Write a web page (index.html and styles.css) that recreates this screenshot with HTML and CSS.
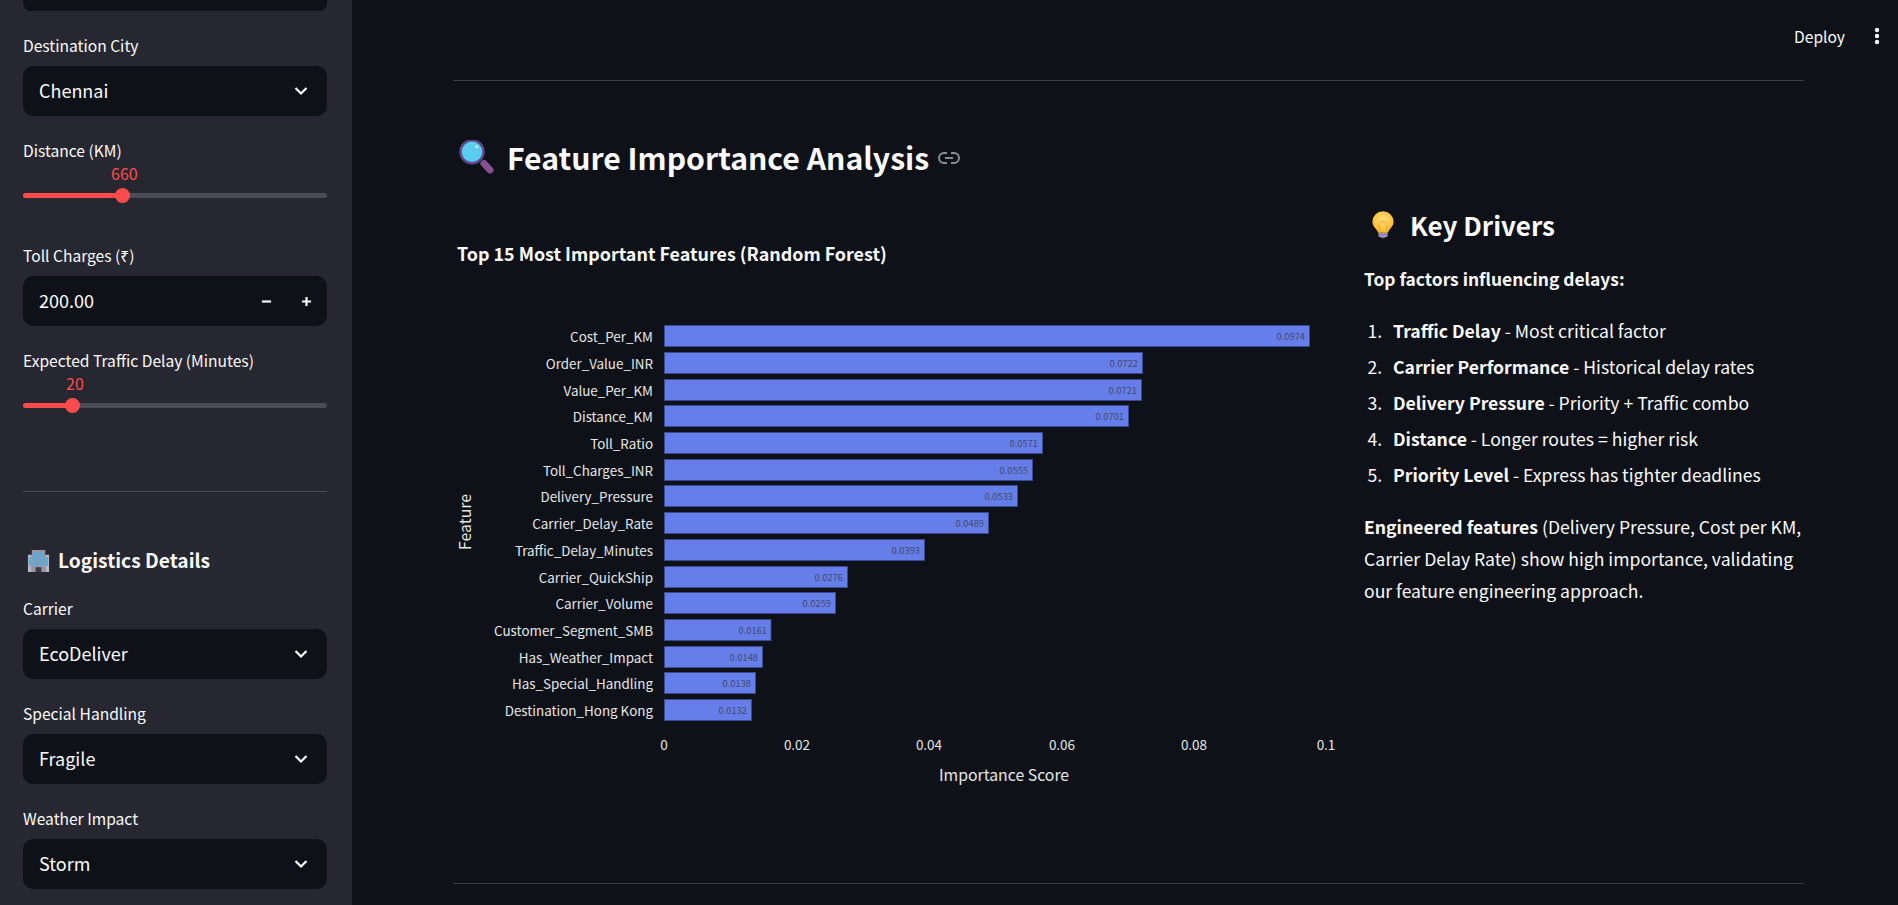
FILE: index.html
```html
<!DOCTYPE html>
<html lang="en">
<head>
    <meta charset="UTF-8">
    <meta name="viewport" content="width=device-width, initial-scale=1.0">
    <title>Feature Importance Analysis</title>
    <link rel="stylesheet" href="styles.css">
</head>
<body>
    <aside class="sidebar">
        <div class="field-cut"></div>

        <div class="field">
            <label class="field-label">Destination City</label>
            <div class="select"><span>Chennai</span>
                <svg class="chevron" viewBox="0 0 14 10"><path d="M1.5 2l5.5 5.5L12.500 2"/></svg>
            </div>
        </div>

        <div class="field">
            <label class="field-label">Distance (KM)</label>
            <div class="slider">
                <span class="slider-value slider-value-distance">660</span>
                <div class="slider-track"><div class="slider-fill slider-fill-distance"><span class="slider-thumb"></span></div></div>
            </div>
        </div>

        <div class="field">
            <label class="field-label">Toll Charges (₹)</label>
            <div class="select"><span>200.00</span>
                <div class="stepper">
                    <svg viewBox="0 0 12 12"><path d="M1 6h10"/></svg>
                    <svg viewBox="0 0 12 12"><path d="M1 6h10M6 1v10"/></svg>
                </div>
            </div>
        </div>

        <div class="field">
            <label class="field-label">Expected Traffic Delay (Minutes)</label>
            <div class="slider">
                <span class="slider-value slider-value-delay">20</span>
                <div class="slider-track"><div class="slider-fill slider-fill-delay"><span class="slider-thumb"></span></div></div>
            </div>
        </div>

        <hr class="sidebar-rule">

        <h3 class="sidebar-title">
            <svg class="emoji-building" viewBox="0 0 24 24">
                <rect x="1" y="6" width="4" height="18" fill="#b9b6c2"/>
                <rect x="19" y="6" width="4" height="18" fill="#b9b6c2"/>
                <rect x="5" y="1" width="14" height="23" fill="#9a95a6"/>
                <g fill="#3fb4ee">
                    <rect x="7" y="4" width="4" height="3.500"/><rect x="13" y="4" width="4" height="3.500"/>
                    <rect x="7" y="9" width="4" height="3.500"/><rect x="13" y="9" width="4" height="3.500"/>
                    <rect x="7" y="14" width="4" height="3"/><rect x="13" y="14" width="4" height="3"/>
                    <rect x="2" y="8.500" width="2" height="9"/><rect x="20" y="8.500" width="2" height="9"/>
                </g>
                <rect x="9" y="19" width="6" height="5" fill="#3f3a48"/>
            </svg>
            Logistics Details
        </h3>

        <div class="field">
            <label class="field-label">Carrier</label>
            <div class="select"><span>EcoDeliver</span>
                <svg class="chevron" viewBox="0 0 14 10"><path d="M1.5 2l5.5 5.5L12.500 2"/></svg>
            </div>
        </div>

        <div class="field">
            <label class="field-label">Special Handling</label>
            <div class="select"><span>Fragile</span>
                <svg class="chevron" viewBox="0 0 14 10"><path d="M1.5 2l5.5 5.5L12.500 2"/></svg>
            </div>
        </div>

        <div class="field">
            <label class="field-label">Weather Impact</label>
            <div class="select"><span>Storm</span>
                <svg class="chevron" viewBox="0 0 14 10"><path d="M1.5 2l5.5 5.5L12.500 2"/></svg>
            </div>
        </div>
    </aside>

    <main class="main">
        <header class="toolbar">
            <span class="deploy">Deploy</span>
            <svg class="kebab" viewBox="0 0 6 18"><circle cx="3" cy="3" r="2.200"/><circle cx="3" cy="9" r="2.200"/><circle cx="3" cy="15" r="2.200"/></svg>
        </header>

        <div class="content">
            <hr class="rule">

            <h2 class="page-title">
                <svg class="emoji-lens" viewBox="0 0 36 36">
                    <path d="M26 23.500l6 6.500" fill="none" stroke="#8a4f93" stroke-width="7" stroke-linecap="round"/>
                    <circle cx="14" cy="11.700" r="11.500" fill="#5bcbef" stroke="#5d4a8e" stroke-width="2.500"/>
                    <circle cx="18.700" cy="6.700" r="1.600" fill="#c4eefa"/>
                </svg>
                <span class="page-title-text">Feature Importance Analysis</span>
                <svg class="link-icon" viewBox="0 0 24 24"><path d="M10 7H7a5 5 0 0 0 0 10h3M14 7h3a5 5 0 0 1 0 10h-3M8 12h8"/></svg>
            </h2>

            <div class="columns">
                <section class="chart-col">
                    <svg class="chart" width="900" height="600" viewBox="0 0 900 600">
                        <text class="chart-title" x="4" y="41">Top 15 Most Important Features (Random Forest)</text>

                        <text class="axis-title" transform="translate(18 302) rotate(-90)" text-anchor="middle">Feature</text>

                        <g class="cats" text-anchor="end">
                            <text x="200" y="122">Cost_Per_KM</text>
                            <text x="200" y="149">Order_Value_INR</text>
                            <text x="200" y="176">Value_Per_KM</text>
                            <text x="200" y="202">Distance_KM</text>
                            <text x="200" y="229">Toll_Ratio</text>
                            <text x="200" y="256">Toll_Charges_INR</text>
                            <text x="200" y="282">Delivery_Pressure</text>
                            <text x="200" y="309">Carrier_Delay_Rate</text>
                            <text x="200" y="336">Traffic_Delay_Minutes</text>
                            <text x="200" y="363">Carrier_QuickShip</text>
                            <text x="200" y="389">Carrier_Volume</text>
                            <text x="200" y="416">Customer_Segment_SMB</text>
                            <text x="200" y="443">Has_Weather_Impact</text>
                            <text x="200" y="469">Has_Special_Handling</text>
                            <text x="200" y="496">Destination_Hong Kong</text>
                        </g>

                        <g class="bars">
                            <rect x="211.500" y="105.500" width="645" height="21"/>
                            <rect x="211.500" y="132.500" width="478" height="21"/>
                            <rect x="211.500" y="159.500" width="477" height="21"/>
                            <rect x="211.500" y="185.500" width="464" height="21"/>
                            <rect x="211.500" y="212.500" width="378" height="21"/>
                            <rect x="211.500" y="239.500" width="368" height="21"/>
                            <rect x="211.500" y="265.500" width="353" height="21"/>
                            <rect x="211.500" y="292.500" width="324" height="21"/>
                            <rect x="211.500" y="319.500" width="260" height="21"/>
                            <rect x="211.500" y="346.500" width="183" height="21"/>
                            <rect x="211.500" y="372.500" width="171" height="21"/>
                            <rect x="211.500" y="399.500" width="106.500" height="21"/>
                            <rect x="211.500" y="426.500" width="98" height="21"/>
                            <rect x="211.500" y="452.500" width="91" height="21"/>
                            <rect x="211.500" y="479.500" width="87" height="21"/>
                        </g>

                        <g class="bar-values" text-anchor="end">
                            <text x="852" y="120">0.0974</text>
                            <text x="685" y="147">0.0722</text>
                            <text x="684" y="174">0.0721</text>
                            <text x="671" y="200">0.0701</text>
                            <text x="585" y="227">0.0571</text>
                            <text x="575" y="254">0.0555</text>
                            <text x="560" y="280">0.0533</text>
                            <text x="531" y="307">0.0489</text>
                            <text x="467" y="334">0.0393</text>
                            <text x="390" y="361">0.0276</text>
                            <text x="378" y="387">0.0259</text>
                            <text x="314" y="414">0.0161</text>
                            <text x="305" y="441">0.0148</text>
                            <text x="298" y="467">0.0138</text>
                            <text x="294" y="494">0.0132</text>
                        </g>

                        <g class="ticks" text-anchor="middle">
                            <text x="211" y="530">0</text>
                            <text x="344" y="530">0.02</text>
                            <text x="476" y="530">0.04</text>
                            <text x="609" y="530">0.06</text>
                            <text x="741" y="530">0.08</text>
                            <text x="873" y="530">0.1</text>
                        </g>

                        <text class="axis-title" x="551" y="561" text-anchor="middle">Importance Score</text>
                    </svg>
                </section>

                <section class="drivers">
                    <h3 class="drivers-title">
                        <svg class="emoji-bulb" viewBox="0 0 24 30">
                            <defs>
                                <radialGradient id="bulbGlow" cx="50%" cy="40%" r="60%">
                                    <stop offset="0" stop-color="#ffe27a"/>
                                    <stop offset="1" stop-color="#fdb62b"/>
                                </radialGradient>
                            </defs>
                            <path d="M12 0.500a11.500 11.500 0 0 0-11.500 11.500c0 4.500 3 6.500 5 9.500 .6 1 1 1.500 1.200 2.500h10.600c.2-1 .6-1.500 1.200-2.500 2-3 5-5 5-9.500a11.500 11.500 0 0 0-11.500-11.500z" fill="url(#bulbGlow)"/>
                            <path d="M8.500 23l-1-9c0-3 9-3 9 0l-1 9" fill="none" stroke="#f0a020" stroke-width="1"/>
                            <rect x="7" y="24" width="10" height="4.500" rx="1.200" fill="#a79cc0"/>
                            <path d="M7 26.200h10" stroke="#6f628c" stroke-width="1"/>
                            <rect x="9.500" y="28.500" width="5" height="1.500" rx=".7" fill="#6f628c"/>
                        </svg>
                        Key Drivers
                    </h3>
                    <p class="lead"><strong>Top factors influencing delays:</strong></p>
                    <ol class="driver-list">
                        <li><strong>Traffic Delay</strong> - Most critical factor</li>
                        <li><strong>Carrier Performance</strong> - Historical delay rates</li>
                        <li><strong>Delivery Pressure</strong> - Priority + Traffic combo</li>
                        <li><strong>Distance</strong> - Longer routes = higher risk</li>
                        <li><strong>Priority Level</strong> - Express has tighter deadlines</li>
                    </ol>
                    <p class="note"><strong>Engineered features</strong> (Delivery Pressure, Cost per KM, Carrier Delay Rate) show high importance, validating our feature engineering approach.</p>
                </section>
            </div>

            <hr class="rule rule-bottom">
        </div>
    </main>
</body>
</html>
```

FILE: styles.css
```css
* {
    box-sizing: border-box;
}

html, body {
    margin: 0;
    height: 905px;
    overflow: hidden;
}

body {
    display: flex;
    font-family: "Noto Sans CJK SC", "Noto Sans", sans-serif;
    background-color: #0e1117;
    color: #fafafa;
}

/* Sidebar */
.sidebar {
    width: 352px;
    flex-shrink: 0;
    height: 905px;
    padding: 0 25px 0 23px;
    background-color: #262730;
    overflow: hidden;
}

.field-cut {
    height: 11px;
    margin-bottom: 24px;
    background-color: #0e1117;
    border-radius: 0 0 8px 8px;
}

.field {
    margin-bottom: 24px;
}

.field-label {
    display: block;
    height: 20px;
    margin-bottom: 11px;
    font-size: 15.6px;
    line-height: 20px;
}

.select {
    display: flex;
    align-items: center;
    justify-content: space-between;
    height: 50px;
    padding: 0 16px;
    background-color: #0e1117;
    border-radius: 10px;
    font-size: 18px;
}

.select span {
    margin-top: -3px;
}

.chevron {
    width: 14px;
    height: 10px;
    margin-right: 3px;
    fill: none;
    stroke: #fafafa;
    stroke-width: 2.2;
}

.stepper {
    display: flex;
    gap: 29px;
    margin-right: -1px;
}

.stepper svg {
    width: 11px;
    height: 11px;
    fill: none;
    stroke: #fafafa;
    stroke-width: 2.4;
}

.slider {
    height: 58px;
    margin-top: -8px;
}

.slider-value {
    display: block;
    height: 22px;
    font-size: 16px;
    line-height: 20px;
    color: #ff4b4b;
}

.slider-value-distance {
    padding-left: 88px;
}

.slider-value-delay {
    padding-left: 43px;
}

.slider-track {
    height: 5px;
    margin-top: 8px;
    background-color: #4a4b57;
    border-radius: 3px;
}

.slider-fill {
    position: relative;
    height: 5px;
    background-color: #ff4b4b;
    border-radius: 3px;
}

.slider-fill-distance {
    width: 100px;
}

.slider-fill-delay {
    width: 50px;
}

.slider-thumb {
    position: absolute;
    top: -5px;
    right: -7px;
    width: 15px;
    height: 15px;
    background-color: #ff4b4b;
    border-radius: 50%;
}

.sidebar-rule {
    height: 1px;
    margin: 60px 0 48px;
    border: 0;
    background-color: #4c4d58;
}

.sidebar-title {
    display: flex;
    align-items: center;
    gap: 8px;
    height: 40px;
    margin: 0 0 18px;
    padding-left: 4px;
    font-size: 19.2px;
    font-weight: 600;
}

.emoji-building {
    width: 23px;
    height: 23px;
}

/* Main area */
.main {
    flex: 1;
    min-width: 0;
}

.toolbar {
    display: flex;
    align-items: center;
    justify-content: flex-end;
    height: 72px;
    padding-right: 18px;
}

.deploy {
    font-size: 15.6px;
}

.kebab {
    width: 6px;
    height: 18px;
    margin-left: 29px;
    fill: #fafafa;
}

.content {
    padding: 8px 94px 0 101px;
}

.rule {
    height: 1px;
    margin: 0;
    border: 0;
    background-color: #3a3c44;
}

.rule-bottom {
    margin-top: 63px;
}

.page-title {
    display: flex;
    align-items: center;
    height: 50px;
    margin: 52px 0 0;
    padding-left: 5px;
    font-size: 30.2px;
    font-weight: 600;
}

.page-title-text {
    margin-top: -3px;
}

.emoji-lens {
    width: 36px;
    height: 36px;
    margin-right: 13px;
}

.link-icon {
    width: 24px;
    height: 24px;
    margin-left: 8px;
    fill: none;
    stroke: #8b8d93;
    stroke-width: 2;
}

.columns {
    display: flex;
    justify-content: space-between;
    margin-top: 15px;
}

.chart-col {
    width: 900px;
}

.chart {
    display: block;
    margin-top: 22px;
}

.chart-title {
    font-size: 17.9px;
    font-weight: 700;
    fill: #fafafa;
}

.axis-title {
    font-size: 15.8px;
    fill: #e6e6e6;
}

.cats text {
    font-size: 13.4px;
    fill: #e6e6e6;
}

.ticks text {
    font-size: 13.5px;
    fill: #e6e6e6;
}

.bars rect {
    fill: #667eea;
    stroke: #3b4a8f;
    stroke-width: 1;
}

.bar-values text {
    font-size: 9.3px;
    fill: #444a66;
}

/* Key drivers column */
.drivers {
    width: 440px;
    padding-top: 4px;
}

.drivers-title {
    display: flex;
    align-items: center;
    gap: 16px;
    height: 44px;
    margin: 0 0 17px;
    padding-left: 8px;
    font-size: 26px;
    font-weight: 600;
}

.emoji-bulb {
    width: 22px;
    height: 29px;
}

.lead, .note {
    margin: 0;
    font-size: 17.6px;
    line-height: 32px;
}

.lead {
    font-size: 17.4px;
}

.driver-list {
    margin: 20px 0 20px;
    padding-left: 22px;
    font-size: 17.6px;
    line-height: 32px;
}

.driver-list li {
    margin-bottom: 4px;
    padding-left: 7px;
}

strong {
    font-weight: 600;
}
```
